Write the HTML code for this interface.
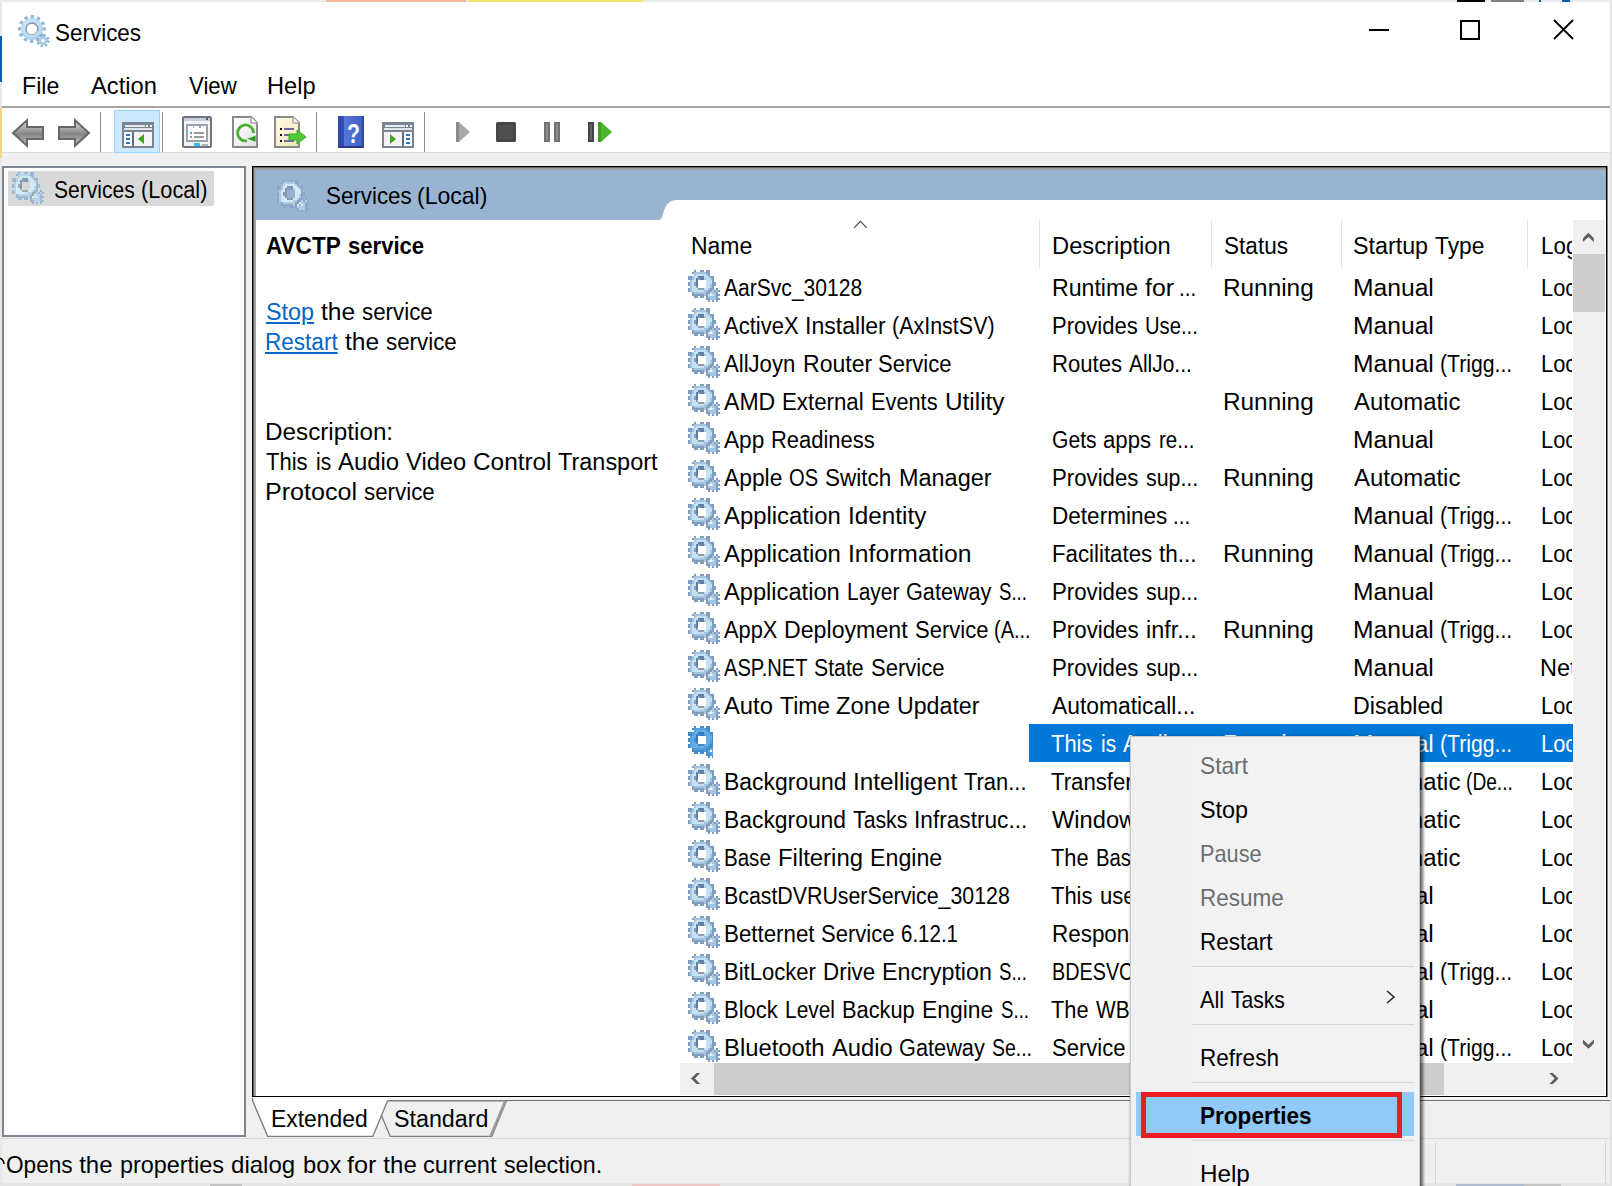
<!DOCTYPE html>
<html><head><meta charset="utf-8"><title>Services</title>
<style>
html,body{margin:0;padding:0}
body{width:1612px;height:1186px;overflow:hidden;background:#f0f0f0;position:relative;font-family:"Liberation Sans",sans-serif;color:#000}
.b{position:absolute;display:block}
.t{position:absolute;white-space:nowrap;display:block;width:0;height:0}
.w{position:absolute;top:0;transform-origin:0 50%;display:block}
.lnk{color:#0066cc}.lnk .w{text-decoration:underline}
#list{position:absolute;left:680px;top:220px;width:893px;height:843px;background:#fff;overflow:hidden}
#menu{position:absolute;left:1130px;top:736px;width:290px;height:460px;background:#f2f2f2;border:1px solid #c8c8c8;box-sizing:border-box;box-shadow:2px 2px 3px 1px rgba(0,0,0,.6)}
</style></head><body>
<svg width="0" height="0" style="position:absolute">
<symbol id="g" viewBox="0 0 16 16"><rect x="3" y="0" width="1" height="1" fill="#7f9ec0"/><rect x="6" y="0" width="2" height="1" fill="#7f9ec0"/><rect x="9" y="0" width="2" height="1" fill="#7f9ec0"/><rect x="2" y="1" width="1" height="1" fill="#7f9ec0"/><rect x="3" y="1" width="6" height="1" fill="#a5c4e0"/><rect x="9" y="1" width="2" height="1" fill="#7f9ec0"/><rect x="3" y="2" width="1" height="1" fill="#a5c4e0"/><rect x="4" y="2" width="5" height="1" fill="#c4e2f4"/><rect x="9" y="2" width="1" height="1" fill="#a5c4e0"/><rect x="10" y="2" width="1" height="1" fill="#7f9ec0"/><rect x="0" y="3" width="2" height="1" fill="#7f9ec0"/><rect x="2" y="3" width="1" height="1" fill="#a5c4e0"/><rect x="3" y="3" width="2" height="1" fill="#c4e2f4"/><rect x="5" y="3" width="3" height="1" fill="#5d7fa8"/><rect x="8" y="3" width="2" height="1" fill="#c4e2f4"/><rect x="10" y="3" width="1" height="1" fill="#a5c4e0"/><rect x="11" y="3" width="2" height="1" fill="#7f9ec0"/><rect x="0" y="4" width="2" height="1" fill="#7f9ec0"/><rect x="2" y="4" width="1" height="1" fill="#a5c4e0"/><rect x="3" y="4" width="1" height="1" fill="#c4e2f4"/><rect x="4" y="4" width="1" height="1" fill="#5d7fa8"/><rect x="5" y="4" width="1" height="1" fill="#8e9cae"/><rect x="6" y="4" width="2" height="1" fill="#5d7fa8"/><rect x="8" y="4" width="1" height="1" fill="#a5c4e0"/><rect x="9" y="4" width="2" height="1" fill="#c4e2f4"/><rect x="11" y="4" width="1" height="1" fill="#a5c4e0"/><rect x="12" y="4" width="1" height="1" fill="#7f9ec0"/><rect x="1" y="5" width="1" height="1" fill="#a5c4e0"/><rect x="2" y="5" width="2" height="1" fill="#c4e2f4"/><rect x="4" y="5" width="1" height="1" fill="#5d7fa8"/><rect x="9" y="5" width="3" height="1" fill="#c4e2f4"/><rect x="12" y="5" width="1" height="1" fill="#7f9ec0"/><rect x="0" y="6" width="1" height="1" fill="#7f9ec0"/><rect x="1" y="6" width="1" height="1" fill="#a5c4e0"/><rect x="2" y="6" width="1" height="1" fill="#c4e2f4"/><rect x="3" y="6" width="1" height="1" fill="#8e9cae"/><rect x="4" y="6" width="1" height="1" fill="#5d7fa8"/><rect x="9" y="6" width="3" height="1" fill="#c4e2f4"/><rect x="12" y="6" width="2" height="1" fill="#7f9ec0"/><rect x="0" y="7" width="1" height="1" fill="#7f9ec0"/><rect x="1" y="7" width="1" height="1" fill="#a5c4e0"/><rect x="2" y="7" width="1" height="1" fill="#c4e2f4"/><rect x="3" y="7" width="1" height="1" fill="#8e9cae"/><rect x="4" y="7" width="1" height="1" fill="#5d7fa8"/><rect x="9" y="7" width="2" height="1" fill="#c4e2f4"/><rect x="11" y="7" width="1" height="1" fill="#a5c4e0"/><rect x="12" y="7" width="2" height="1" fill="#7f9ec0"/><rect x="1" y="8" width="1" height="1" fill="#a5c4e0"/><rect x="2" y="8" width="2" height="1" fill="#c4e2f4"/><rect x="4" y="8" width="1" height="1" fill="#8e9cae"/><rect x="9" y="8" width="2" height="1" fill="#c4e2f4"/><rect x="11" y="8" width="1" height="1" fill="#a5c4e0"/><rect x="12" y="8" width="1" height="1" fill="#7f9ec0"/><rect x="0" y="9" width="1" height="1" fill="#7f9ec0"/><rect x="1" y="9" width="1" height="1" fill="#a5c4e0"/><rect x="2" y="9" width="3" height="1" fill="#c4e2f4"/><rect x="5" y="9" width="3" height="1" fill="#8e9cae"/><rect x="8" y="9" width="2" height="1" fill="#c4e2f4"/><rect x="10" y="9" width="1" height="1" fill="#a5c4e0"/><rect x="11" y="9" width="2" height="1" fill="#7f9ec0"/><rect x="14" y="9" width="1" height="1" fill="#7f9ec0"/><rect x="0" y="10" width="1" height="1" fill="#7f9ec0"/><rect x="1" y="10" width="1" height="1" fill="#a5c4e0"/><rect x="2" y="10" width="6" height="1" fill="#c4e2f4"/><rect x="8" y="10" width="2" height="1" fill="#a5c4e0"/><rect x="10" y="10" width="1" height="1" fill="#8e9cae"/><rect x="11" y="10" width="1" height="1" fill="#7f9ec0"/><rect x="12" y="10" width="1" height="1" fill="#a5c4e0"/><rect x="13" y="10" width="1" height="1" fill="#7f9ec0"/><rect x="14" y="10" width="1" height="1" fill="#a5c4e0"/><rect x="15" y="10" width="1" height="1" fill="#7f9ec0"/><rect x="2" y="11" width="1" height="1" fill="#7f9ec0"/><rect x="3" y="11" width="6" height="1" fill="#a5c4e0"/><rect x="9" y="11" width="1" height="1" fill="#7f9ec0"/><rect x="10" y="11" width="1" height="1" fill="#8e9cae"/><rect x="11" y="11" width="1" height="1" fill="#c4e2f4"/><rect x="12" y="11" width="2" height="1" fill="#a5c4e0"/><rect x="14" y="11" width="1" height="1" fill="#7f9ec0"/><rect x="2" y="12" width="6" height="1" fill="#7f9ec0"/><rect x="8" y="12" width="1" height="1" fill="#a5c4e0"/><rect x="9" y="12" width="1" height="1" fill="#8e9cae"/><rect x="10" y="12" width="1" height="1" fill="#c4e2f4"/><rect x="12" y="12" width="1" height="1" fill="#c4e2f4"/><rect x="13" y="12" width="1" height="1" fill="#a5c4e0"/><rect x="14" y="12" width="2" height="1" fill="#7f9ec0"/><rect x="3" y="13" width="2" height="1" fill="#7f9ec0"/><rect x="6" y="13" width="2" height="1" fill="#7f9ec0"/><rect x="9" y="13" width="1" height="1" fill="#7f9ec0"/><rect x="10" y="13" width="4" height="1" fill="#a5c4e0"/><rect x="14" y="13" width="1" height="1" fill="#7f9ec0"/><rect x="9" y="14" width="2" height="1" fill="#7f9ec0"/><rect x="11" y="14" width="3" height="1" fill="#a5c4e0"/><rect x="14" y="14" width="2" height="1" fill="#7f9ec0"/><rect x="10" y="15" width="1" height="1" fill="#7f9ec0"/><rect x="12" y="15" width="1" height="1" fill="#7f9ec0"/><rect x="14" y="15" width="1" height="1" fill="#7f9ec0"/></symbol>
<symbol id="gs" viewBox="0 0 16 16"><rect x="3" y="0" width="1" height="1" fill="#3f8bcb"/><rect x="6" y="0" width="2" height="1" fill="#3f8bcb"/><rect x="9" y="0" width="2" height="1" fill="#3f8bcb"/><rect x="2" y="1" width="1" height="1" fill="#3f8bcb"/><rect x="3" y="1" width="6" height="1" fill="#529edb"/><rect x="9" y="1" width="2" height="1" fill="#3f8bcb"/><rect x="3" y="2" width="1" height="1" fill="#529edb"/><rect x="4" y="2" width="5" height="1" fill="#62ade5"/><rect x="9" y="2" width="1" height="1" fill="#529edb"/><rect x="10" y="2" width="1" height="1" fill="#3f8bcb"/><rect x="0" y="3" width="2" height="1" fill="#3f8bcb"/><rect x="2" y="3" width="1" height="1" fill="#529edb"/><rect x="3" y="3" width="2" height="1" fill="#62ade5"/><rect x="5" y="3" width="3" height="1" fill="#2e7bbf"/><rect x="8" y="3" width="2" height="1" fill="#62ade5"/><rect x="10" y="3" width="1" height="1" fill="#529edb"/><rect x="11" y="3" width="2" height="1" fill="#3f8bcb"/><rect x="0" y="4" width="2" height="1" fill="#3f8bcb"/><rect x="2" y="4" width="1" height="1" fill="#529edb"/><rect x="3" y="4" width="1" height="1" fill="#62ade5"/><rect x="4" y="4" width="1" height="1" fill="#2e7bbf"/><rect x="5" y="4" width="1" height="1" fill="#478ac2"/><rect x="6" y="4" width="2" height="1" fill="#2e7bbf"/><rect x="8" y="4" width="1" height="1" fill="#529edb"/><rect x="9" y="4" width="2" height="1" fill="#62ade5"/><rect x="11" y="4" width="1" height="1" fill="#529edb"/><rect x="12" y="4" width="1" height="1" fill="#3f8bcb"/><rect x="1" y="5" width="1" height="1" fill="#529edb"/><rect x="2" y="5" width="2" height="1" fill="#62ade5"/><rect x="4" y="5" width="1" height="1" fill="#2e7bbf"/><rect x="9" y="5" width="3" height="1" fill="#62ade5"/><rect x="12" y="5" width="1" height="1" fill="#3f8bcb"/><rect x="0" y="6" width="1" height="1" fill="#3f8bcb"/><rect x="1" y="6" width="1" height="1" fill="#529edb"/><rect x="2" y="6" width="1" height="1" fill="#62ade5"/><rect x="3" y="6" width="1" height="1" fill="#478ac2"/><rect x="4" y="6" width="1" height="1" fill="#2e7bbf"/><rect x="9" y="6" width="3" height="1" fill="#62ade5"/><rect x="12" y="6" width="2" height="1" fill="#3f8bcb"/><rect x="0" y="7" width="1" height="1" fill="#3f8bcb"/><rect x="1" y="7" width="1" height="1" fill="#529edb"/><rect x="2" y="7" width="1" height="1" fill="#62ade5"/><rect x="3" y="7" width="1" height="1" fill="#478ac2"/><rect x="4" y="7" width="1" height="1" fill="#2e7bbf"/><rect x="9" y="7" width="2" height="1" fill="#62ade5"/><rect x="11" y="7" width="1" height="1" fill="#529edb"/><rect x="12" y="7" width="2" height="1" fill="#3f8bcb"/><rect x="1" y="8" width="1" height="1" fill="#529edb"/><rect x="2" y="8" width="2" height="1" fill="#62ade5"/><rect x="4" y="8" width="1" height="1" fill="#478ac2"/><rect x="9" y="8" width="2" height="1" fill="#62ade5"/><rect x="11" y="8" width="1" height="1" fill="#529edb"/><rect x="12" y="8" width="1" height="1" fill="#3f8bcb"/><rect x="0" y="9" width="1" height="1" fill="#3f8bcb"/><rect x="1" y="9" width="1" height="1" fill="#529edb"/><rect x="2" y="9" width="3" height="1" fill="#62ade5"/><rect x="5" y="9" width="3" height="1" fill="#478ac2"/><rect x="8" y="9" width="2" height="1" fill="#62ade5"/><rect x="10" y="9" width="1" height="1" fill="#529edb"/><rect x="11" y="9" width="2" height="1" fill="#3f8bcb"/><rect x="14" y="9" width="1" height="1" fill="#3f8bcb"/><rect x="0" y="10" width="1" height="1" fill="#3f8bcb"/><rect x="1" y="10" width="1" height="1" fill="#529edb"/><rect x="2" y="10" width="6" height="1" fill="#62ade5"/><rect x="8" y="10" width="2" height="1" fill="#529edb"/><rect x="10" y="10" width="1" height="1" fill="#478ac2"/><rect x="11" y="10" width="1" height="1" fill="#3f8bcb"/><rect x="12" y="10" width="1" height="1" fill="#529edb"/><rect x="13" y="10" width="1" height="1" fill="#3f8bcb"/><rect x="14" y="10" width="1" height="1" fill="#529edb"/><rect x="15" y="10" width="1" height="1" fill="#3f8bcb"/><rect x="2" y="11" width="1" height="1" fill="#3f8bcb"/><rect x="3" y="11" width="6" height="1" fill="#529edb"/><rect x="9" y="11" width="1" height="1" fill="#3f8bcb"/><rect x="10" y="11" width="1" height="1" fill="#478ac2"/><rect x="11" y="11" width="1" height="1" fill="#62ade5"/><rect x="12" y="11" width="2" height="1" fill="#529edb"/><rect x="14" y="11" width="1" height="1" fill="#3f8bcb"/><rect x="2" y="12" width="6" height="1" fill="#3f8bcb"/><rect x="8" y="12" width="1" height="1" fill="#529edb"/><rect x="9" y="12" width="1" height="1" fill="#478ac2"/><rect x="10" y="12" width="1" height="1" fill="#62ade5"/><rect x="12" y="12" width="1" height="1" fill="#62ade5"/><rect x="13" y="12" width="1" height="1" fill="#529edb"/><rect x="14" y="12" width="2" height="1" fill="#3f8bcb"/><rect x="3" y="13" width="2" height="1" fill="#3f8bcb"/><rect x="6" y="13" width="2" height="1" fill="#3f8bcb"/><rect x="9" y="13" width="1" height="1" fill="#3f8bcb"/><rect x="10" y="13" width="4" height="1" fill="#529edb"/><rect x="14" y="13" width="1" height="1" fill="#3f8bcb"/><rect x="9" y="14" width="2" height="1" fill="#3f8bcb"/><rect x="11" y="14" width="3" height="1" fill="#529edb"/><rect x="14" y="14" width="2" height="1" fill="#3f8bcb"/><rect x="10" y="15" width="1" height="1" fill="#3f8bcb"/><rect x="12" y="15" width="1" height="1" fill="#3f8bcb"/><rect x="14" y="15" width="1" height="1" fill="#3f8bcb"/></symbol>
<symbol id="gf" viewBox="0 0 16 16"><rect x="3" y="0" width="1" height="1" fill="#8aa7c6"/><rect x="6" y="0" width="2" height="1" fill="#8aa7c6"/><rect x="9" y="0" width="2" height="1" fill="#8aa7c6"/><rect x="2" y="1" width="1" height="1" fill="#8aa7c6"/><rect x="3" y="1" width="6" height="1" fill="#b0cfe6"/><rect x="9" y="1" width="2" height="1" fill="#8aa7c6"/><rect x="3" y="2" width="1" height="1" fill="#b0cfe6"/><rect x="4" y="2" width="5" height="1" fill="#d9f0fb"/><rect x="9" y="2" width="1" height="1" fill="#b0cfe6"/><rect x="10" y="2" width="1" height="1" fill="#8aa7c6"/><rect x="0" y="3" width="2" height="1" fill="#8aa7c6"/><rect x="2" y="3" width="1" height="1" fill="#b0cfe6"/><rect x="3" y="3" width="2" height="1" fill="#d9f0fb"/><rect x="5" y="3" width="3" height="1" fill="#7d96b6"/><rect x="8" y="3" width="2" height="1" fill="#d9f0fb"/><rect x="10" y="3" width="1" height="1" fill="#b0cfe6"/><rect x="11" y="3" width="2" height="1" fill="#8aa7c6"/><rect x="0" y="4" width="2" height="1" fill="#8aa7c6"/><rect x="2" y="4" width="1" height="1" fill="#b0cfe6"/><rect x="3" y="4" width="1" height="1" fill="#d9f0fb"/><rect x="4" y="4" width="1" height="1" fill="#7d96b6"/><rect x="5" y="4" width="1" height="1" fill="#8d98a8"/><rect x="6" y="4" width="2" height="1" fill="#7d96b6"/><rect x="8" y="4" width="1" height="1" fill="#b0cfe6"/><rect x="9" y="4" width="2" height="1" fill="#d9f0fb"/><rect x="11" y="4" width="1" height="1" fill="#b0cfe6"/><rect x="12" y="4" width="1" height="1" fill="#8aa7c6"/><rect x="1" y="5" width="1" height="1" fill="#b0cfe6"/><rect x="2" y="5" width="2" height="1" fill="#d9f0fb"/><rect x="4" y="5" width="1" height="1" fill="#7d96b6"/><rect x="9" y="5" width="3" height="1" fill="#d9f0fb"/><rect x="12" y="5" width="1" height="1" fill="#8aa7c6"/><rect x="0" y="6" width="1" height="1" fill="#8aa7c6"/><rect x="1" y="6" width="1" height="1" fill="#b0cfe6"/><rect x="2" y="6" width="1" height="1" fill="#d9f0fb"/><rect x="3" y="6" width="1" height="1" fill="#8d98a8"/><rect x="4" y="6" width="1" height="1" fill="#7d96b6"/><rect x="9" y="6" width="3" height="1" fill="#d9f0fb"/><rect x="12" y="6" width="2" height="1" fill="#8aa7c6"/><rect x="0" y="7" width="1" height="1" fill="#8aa7c6"/><rect x="1" y="7" width="1" height="1" fill="#b0cfe6"/><rect x="2" y="7" width="1" height="1" fill="#d9f0fb"/><rect x="3" y="7" width="1" height="1" fill="#8d98a8"/><rect x="4" y="7" width="1" height="1" fill="#7d96b6"/><rect x="9" y="7" width="2" height="1" fill="#d9f0fb"/><rect x="11" y="7" width="1" height="1" fill="#b0cfe6"/><rect x="12" y="7" width="2" height="1" fill="#8aa7c6"/><rect x="1" y="8" width="1" height="1" fill="#b0cfe6"/><rect x="2" y="8" width="2" height="1" fill="#d9f0fb"/><rect x="4" y="8" width="1" height="1" fill="#8d98a8"/><rect x="9" y="8" width="2" height="1" fill="#d9f0fb"/><rect x="11" y="8" width="1" height="1" fill="#b0cfe6"/><rect x="12" y="8" width="1" height="1" fill="#8aa7c6"/><rect x="0" y="9" width="1" height="1" fill="#8aa7c6"/><rect x="1" y="9" width="1" height="1" fill="#b0cfe6"/><rect x="2" y="9" width="3" height="1" fill="#d9f0fb"/><rect x="5" y="9" width="3" height="1" fill="#8d98a8"/><rect x="8" y="9" width="2" height="1" fill="#d9f0fb"/><rect x="10" y="9" width="1" height="1" fill="#b0cfe6"/><rect x="11" y="9" width="2" height="1" fill="#8aa7c6"/><rect x="14" y="9" width="1" height="1" fill="#8aa7c6"/><rect x="0" y="10" width="1" height="1" fill="#8aa7c6"/><rect x="1" y="10" width="1" height="1" fill="#b0cfe6"/><rect x="2" y="10" width="6" height="1" fill="#d9f0fb"/><rect x="8" y="10" width="2" height="1" fill="#b0cfe6"/><rect x="10" y="10" width="1" height="1" fill="#8d98a8"/><rect x="11" y="10" width="1" height="1" fill="#8aa7c6"/><rect x="12" y="10" width="1" height="1" fill="#b0cfe6"/><rect x="13" y="10" width="1" height="1" fill="#8aa7c6"/><rect x="14" y="10" width="1" height="1" fill="#b0cfe6"/><rect x="15" y="10" width="1" height="1" fill="#8aa7c6"/><rect x="2" y="11" width="1" height="1" fill="#8aa7c6"/><rect x="3" y="11" width="6" height="1" fill="#b0cfe6"/><rect x="9" y="11" width="1" height="1" fill="#8aa7c6"/><rect x="10" y="11" width="1" height="1" fill="#8d98a8"/><rect x="11" y="11" width="1" height="1" fill="#d9f0fb"/><rect x="12" y="11" width="2" height="1" fill="#b0cfe6"/><rect x="14" y="11" width="1" height="1" fill="#8aa7c6"/><rect x="2" y="12" width="6" height="1" fill="#8aa7c6"/><rect x="8" y="12" width="1" height="1" fill="#b0cfe6"/><rect x="9" y="12" width="1" height="1" fill="#8d98a8"/><rect x="10" y="12" width="1" height="1" fill="#d9f0fb"/><rect x="12" y="12" width="1" height="1" fill="#d9f0fb"/><rect x="13" y="12" width="1" height="1" fill="#b0cfe6"/><rect x="14" y="12" width="2" height="1" fill="#8aa7c6"/><rect x="3" y="13" width="2" height="1" fill="#8aa7c6"/><rect x="6" y="13" width="2" height="1" fill="#8aa7c6"/><rect x="9" y="13" width="1" height="1" fill="#8aa7c6"/><rect x="10" y="13" width="4" height="1" fill="#b0cfe6"/><rect x="14" y="13" width="1" height="1" fill="#8aa7c6"/><rect x="9" y="14" width="2" height="1" fill="#8aa7c6"/><rect x="11" y="14" width="3" height="1" fill="#b0cfe6"/><rect x="14" y="14" width="2" height="1" fill="#8aa7c6"/><rect x="10" y="15" width="1" height="1" fill="#8aa7c6"/><rect x="12" y="15" width="1" height="1" fill="#8aa7c6"/><rect x="14" y="15" width="1" height="1" fill="#8aa7c6"/></symbol>
<symbol id="gl" viewBox="0 0 16 16"><rect x="3" y="0" width="1" height="1" fill="#93b4d6"/><rect x="6" y="0" width="2" height="1" fill="#93b4d6"/><rect x="9" y="0" width="2" height="1" fill="#93b4d6"/><rect x="2" y="1" width="1" height="1" fill="#93b4d6"/><rect x="3" y="1" width="6" height="1" fill="#b4d3ea"/><rect x="9" y="1" width="2" height="1" fill="#93b4d6"/><rect x="3" y="2" width="1" height="1" fill="#b4d3ea"/><rect x="4" y="2" width="5" height="1" fill="#cdeefb"/><rect x="9" y="2" width="1" height="1" fill="#b4d3ea"/><rect x="10" y="2" width="1" height="1" fill="#93b4d6"/><rect x="0" y="3" width="2" height="1" fill="#93b4d6"/><rect x="2" y="3" width="1" height="1" fill="#b4d3ea"/><rect x="3" y="3" width="2" height="1" fill="#cdeefb"/><rect x="5" y="3" width="3" height="1" fill="#7b93b0"/><rect x="8" y="3" width="2" height="1" fill="#cdeefb"/><rect x="10" y="3" width="1" height="1" fill="#b4d3ea"/><rect x="11" y="3" width="2" height="1" fill="#93b4d6"/><rect x="0" y="4" width="2" height="1" fill="#93b4d6"/><rect x="2" y="4" width="1" height="1" fill="#b4d3ea"/><rect x="3" y="4" width="1" height="1" fill="#cdeefb"/><rect x="4" y="4" width="1" height="1" fill="#7b93b0"/><rect x="5" y="4" width="1" height="1" fill="#9aa3ad"/><rect x="6" y="4" width="2" height="1" fill="#7b93b0"/><rect x="8" y="4" width="1" height="1" fill="#b4d3ea"/><rect x="9" y="4" width="2" height="1" fill="#cdeefb"/><rect x="11" y="4" width="1" height="1" fill="#b4d3ea"/><rect x="12" y="4" width="1" height="1" fill="#93b4d6"/><rect x="1" y="5" width="1" height="1" fill="#b4d3ea"/><rect x="2" y="5" width="2" height="1" fill="#cdeefb"/><rect x="4" y="5" width="1" height="1" fill="#7b93b0"/><rect x="9" y="5" width="3" height="1" fill="#cdeefb"/><rect x="12" y="5" width="1" height="1" fill="#93b4d6"/><rect x="0" y="6" width="1" height="1" fill="#93b4d6"/><rect x="1" y="6" width="1" height="1" fill="#b4d3ea"/><rect x="2" y="6" width="1" height="1" fill="#cdeefb"/><rect x="3" y="6" width="1" height="1" fill="#9aa3ad"/><rect x="4" y="6" width="1" height="1" fill="#7b93b0"/><rect x="9" y="6" width="3" height="1" fill="#cdeefb"/><rect x="12" y="6" width="2" height="1" fill="#93b4d6"/><rect x="0" y="7" width="1" height="1" fill="#93b4d6"/><rect x="1" y="7" width="1" height="1" fill="#b4d3ea"/><rect x="2" y="7" width="1" height="1" fill="#cdeefb"/><rect x="3" y="7" width="1" height="1" fill="#9aa3ad"/><rect x="4" y="7" width="1" height="1" fill="#7b93b0"/><rect x="9" y="7" width="2" height="1" fill="#cdeefb"/><rect x="11" y="7" width="1" height="1" fill="#b4d3ea"/><rect x="12" y="7" width="2" height="1" fill="#93b4d6"/><rect x="1" y="8" width="1" height="1" fill="#b4d3ea"/><rect x="2" y="8" width="2" height="1" fill="#cdeefb"/><rect x="4" y="8" width="1" height="1" fill="#9aa3ad"/><rect x="9" y="8" width="2" height="1" fill="#cdeefb"/><rect x="11" y="8" width="1" height="1" fill="#b4d3ea"/><rect x="12" y="8" width="1" height="1" fill="#93b4d6"/><rect x="0" y="9" width="1" height="1" fill="#93b4d6"/><rect x="1" y="9" width="1" height="1" fill="#b4d3ea"/><rect x="2" y="9" width="3" height="1" fill="#cdeefb"/><rect x="5" y="9" width="3" height="1" fill="#9aa3ad"/><rect x="8" y="9" width="2" height="1" fill="#cdeefb"/><rect x="10" y="9" width="1" height="1" fill="#b4d3ea"/><rect x="11" y="9" width="2" height="1" fill="#93b4d6"/><rect x="14" y="9" width="1" height="1" fill="#93b4d6"/><rect x="0" y="10" width="1" height="1" fill="#93b4d6"/><rect x="1" y="10" width="1" height="1" fill="#b4d3ea"/><rect x="2" y="10" width="6" height="1" fill="#cdeefb"/><rect x="8" y="10" width="2" height="1" fill="#b4d3ea"/><rect x="10" y="10" width="1" height="1" fill="#9aa3ad"/><rect x="11" y="10" width="1" height="1" fill="#93b4d6"/><rect x="12" y="10" width="1" height="1" fill="#b4d3ea"/><rect x="13" y="10" width="1" height="1" fill="#93b4d6"/><rect x="14" y="10" width="1" height="1" fill="#b4d3ea"/><rect x="15" y="10" width="1" height="1" fill="#93b4d6"/><rect x="2" y="11" width="1" height="1" fill="#93b4d6"/><rect x="3" y="11" width="6" height="1" fill="#b4d3ea"/><rect x="9" y="11" width="1" height="1" fill="#93b4d6"/><rect x="10" y="11" width="1" height="1" fill="#9aa3ad"/><rect x="11" y="11" width="1" height="1" fill="#cdeefb"/><rect x="12" y="11" width="2" height="1" fill="#b4d3ea"/><rect x="14" y="11" width="1" height="1" fill="#93b4d6"/><rect x="2" y="12" width="6" height="1" fill="#93b4d6"/><rect x="8" y="12" width="1" height="1" fill="#b4d3ea"/><rect x="9" y="12" width="1" height="1" fill="#9aa3ad"/><rect x="10" y="12" width="1" height="1" fill="#cdeefb"/><rect x="12" y="12" width="1" height="1" fill="#cdeefb"/><rect x="13" y="12" width="1" height="1" fill="#b4d3ea"/><rect x="14" y="12" width="2" height="1" fill="#93b4d6"/><rect x="3" y="13" width="2" height="1" fill="#93b4d6"/><rect x="6" y="13" width="2" height="1" fill="#93b4d6"/><rect x="9" y="13" width="1" height="1" fill="#93b4d6"/><rect x="10" y="13" width="4" height="1" fill="#b4d3ea"/><rect x="14" y="13" width="1" height="1" fill="#93b4d6"/><rect x="9" y="14" width="2" height="1" fill="#93b4d6"/><rect x="11" y="14" width="3" height="1" fill="#b4d3ea"/><rect x="14" y="14" width="2" height="1" fill="#93b4d6"/><rect x="10" y="15" width="1" height="1" fill="#93b4d6"/><rect x="12" y="15" width="1" height="1" fill="#93b4d6"/><rect x="14" y="15" width="1" height="1" fill="#93b4d6"/></symbol>
</svg>
<div class="b" style="left:0px;top:0px;width:1612px;height:3px;background:#e9e9e9;"></div>
<div class="b" style="left:326px;top:0px;width:140px;height:2px;background:#f4b8a4;"></div>
<div class="b" style="left:468px;top:0px;width:175px;height:2px;background:#ece56f;"></div>
<div class="b" style="left:1457px;top:0px;width:28px;height:2px;background:#000;"></div>
<div class="b" style="left:1491px;top:0px;width:33px;height:2px;background:#808080;"></div>
<div class="b" style="left:0px;top:2px;width:2px;height:1184px;background:#e8e8e8;"></div>
<div class="b" style="left:0px;top:36px;width:2px;height:46px;background:#0a5db5;"></div>
<div class="b" style="left:0px;top:108px;width:2px;height:50px;background:#f0d684;"></div>
<div class="b" style="left:1610px;top:2px;width:2px;height:1184px;background:#e4e4e4;"></div>
<div class="b" style="left:0px;top:1183px;width:1612px;height:3px;background:#e6e6e6;"></div>
<div class="b" style="left:210px;top:1184px;width:32px;height:2px;background:#c4c4c4;"></div>
<div class="b" style="left:632px;top:1184px;width:88px;height:2px;background:#f2c9c9;"></div>
<div class="b" style="left:1456px;top:1184px;width:68px;height:2px;background:#aebccd;"></div>
<div class="b" style="left:1524px;top:1184px;width:37px;height:2px;background:#c6c6c6;"></div>
<div class="b" style="left:1539px;top:0px;width:2px;height:2px;background:#0a5db5;"></div>
<div class="b" style="left:1562px;top:0px;width:8px;height:2px;background:#0a5db5;"></div>
<div class="b" style="left:2px;top:2px;width:1608px;height:1181px;background:#f0f0f0;"></div>
<div class="b" style="left:2px;top:2px;width:1608px;height:104px;background:#fff;"></div>
<div class="b" style="left:2px;top:106px;width:1608px;height:2px;background:#a5a5a5;"></div>
<div class="b" style="left:2px;top:108px;width:1608px;height:44px;background:#fff;"></div>
<div class="b" style="left:2px;top:152px;width:1608px;height:1px;background:#dcdcdc;"></div>
<svg class="b" style="left:14px;top:10px" width="40" height="40">
<defs><radialGradient id="tg" cx=".45" cy=".4" r=".7"><stop offset="0" stop-color="#d6f0fb"/><stop offset=".7" stop-color="#b7dbf0"/><stop offset="1" stop-color="#93b9dc"/></radialGradient></defs>
<circle cx="17.9" cy="19" r="12.1" fill="none" stroke="#8fb3d5" stroke-width="3.6" stroke-dasharray="3.1 3.235" transform="rotate(-7 17.9 19)"/>
<circle cx="17.9" cy="19" r="10.9" fill="url(#tg)"/>
<circle cx="29" cy="30.6" r="5.3" fill="none" stroke="#88abcf" stroke-width="2.6" stroke-dasharray="2.0 2.163"/>
<circle cx="29" cy="30.6" r="4.7" fill="#a8cbe7"/><circle cx="29" cy="30.6" r="1.7" fill="#fff"/>
<circle cx="17.9" cy="19" r="6.0" fill="#fff" stroke="#8d9aab" stroke-width="1.5"/>
<path d="M12 22.5 A6.6 6.6 0 0 0 24 21.5" fill="none" stroke="#b8dcf2" stroke-width="1.6"/>
</svg>
<span class="t" style="left:0;top:18.0px;font-size:24px;line-height:30px;"><span class="w" style="left:54.90px;transform:scaleX(0.9353)">Services</span></span>
<svg class="b" style="left:1360px;top:12px" width="230" height="40"><g stroke="#000" stroke-width="2" fill="none"><path d="M9 18H29"/><rect x="101" y="9" width="18" height="18"/><path d="M194 8L213 27M213 8L194 27" stroke-width="1.8"/></g></svg>
<span class="t" style="left:0;top:71.0px;font-size:24px;line-height:30px;"><span class="w" style="left:21.75px;transform:scaleX(0.9639)">File</span></span>
<span class="t" style="left:0;top:71.0px;font-size:24px;line-height:30px;"><span class="w" style="left:90.60px;transform:scaleX(0.9881)">Action</span></span>
<span class="t" style="left:0;top:71.0px;font-size:24px;line-height:30px;"><span class="w" style="left:188.60px;transform:scaleX(0.9240)">View</span></span>
<span class="t" style="left:0;top:71.0px;font-size:24px;line-height:30px;"><span class="w" style="left:267.31px;transform:scaleX(0.9858)">Help</span></span>
<div class="b" style="left:100px;top:112px;width:1px;height:40px;background:#8e8e8e;"></div>
<div class="b" style="left:162px;top:112px;width:1px;height:40px;background:#8e8e8e;"></div>
<div class="b" style="left:316px;top:112px;width:1px;height:40px;background:#8e8e8e;"></div>
<div class="b" style="left:424px;top:112px;width:1px;height:40px;background:#8e8e8e;"></div>
<div class="b" style="left:114px;top:110px;width:46px;height:43px;background:#cce8ff;box-sizing:border-box;border:1px solid #99d1ff;"></div>
<svg class="b" style="left:0;top:108px" width="640" height="46">
<defs>
<linearGradient id="ga" x1="0" y1="0" x2="0" y2="1"><stop offset="0" stop-color="#cfcfcf"/><stop offset=".55" stop-color="#858585"/><stop offset="1" stop-color="#b8b8b8"/></linearGradient>
<linearGradient id="gh" x1="0" y1="0" x2="1" y2="0"><stop offset="0" stop-color="#2f45ad"/><stop offset=".22" stop-color="#3550b8"/><stop offset=".23" stop-color="#5676d8"/><stop offset="1" stop-color="#3f5fc4"/></linearGradient>
<linearGradient id="gp" x1="0" y1="0" x2="1" y2="1"><stop offset="0" stop-color="#ffffff"/><stop offset="1" stop-color="#e4e4e4"/></linearGradient>
<linearGradient id="gc" x1="0" y1="0" x2="1" y2="1"><stop offset="0" stop-color="#fffbe8"/><stop offset="1" stop-color="#f3e5b4"/></linearGradient>
</defs>
<!-- back / forward -->
<path d="M11.5 25 L28 10 V18 H44 V32 H28 V40 Z" fill="#676767"/><path d="M14.6 25 L26 14.6 V20 H42 V30 H26 V35.4 Z" fill="url(#ga)"/>
<path d="M90.5 25 L74 10 V18 H58 V32 H74 V40 Z" fill="#676767"/><path d="M87.4 25 L76 14.6 V20 H60 V30 H76 V35.4 Z" fill="url(#ga)"/>
<!-- show/hide tree -->
<g transform="translate(122,14)">
<rect x="1" y="1" width="30" height="24" fill="#f4f4f4" stroke="#7b8494" stroke-width="2"/>
<rect x="2" y="2" width="28" height="8" fill="#7b8494"/><rect x="3" y="3" width="20" height="2" fill="#e6e9ef"/><rect x="24" y="3" width="2" height="2" fill="#fff"/><rect x="28" y="3" width="2" height="2" fill="#fff"/><rect x="2" y="6" width="28" height="2" fill="#dfe3ea"/>
<rect x="10" y="10" width="2" height="14" fill="#5c6b8a"/><rect x="2" y="10" width="8" height="14" fill="#fff"/>
<rect x="4" y="12" width="4" height="2" fill="#2f6fc0"/><rect x="4" y="16" width="4" height="2" fill="#2f6fc0"/><rect x="4" y="20" width="4" height="2" fill="#2f6fc0"/>
<path d="M16 17 L22 12 V22 Z" fill="#41a51e"/>
</g>
<!-- properties -->
<g transform="translate(182,8)">
<rect x="1" y="1" width="28" height="30" rx="1" fill="#f3f4f6" stroke="#6d7482" stroke-width="2"/>
<rect x="2" y="2" width="26" height="3" fill="#c9ccd3"/><rect x="24" y="2" width="2" height="2" fill="#3d5a99"/>
<rect x="5" y="9" width="20" height="16" fill="#fff" stroke="#9aa0ad" stroke-width="2"/>
<rect x="11" y="8" width="14" height="4" fill="#9aa0ad"/><rect x="12" y="10" width="5" height="2" fill="#fff"/><rect x="19" y="10" width="5" height="2" fill="#fff"/>
<rect x="8" y="16" width="2" height="2" fill="#19b5f1"/><rect x="12" y="16" width="10" height="2" fill="#9a9a9a"/>
<rect x="8" y="20" width="2" height="2" fill="#9a9a9a"/><rect x="12" y="20" width="10" height="2" fill="#9a9a9a"/>
<rect x="12" y="27" width="6" height="3" fill="#28c4f5"/><rect x="20" y="28" width="6" height="2" fill="#b5b5b5"/>
</g>
<!-- refresh -->
<g transform="translate(232,8)">
<path d="M1 1 H19 L25 7 V31 H1 Z" fill="url(#gp)" stroke="#8a8a8a" stroke-width="2"/>
<path d="M19 1 V7 H25" fill="#fff" stroke="#a8a8a8" stroke-width="1.5"/>
<path d="M21.6 17 A8 8 0 1 0 15 24.8" fill="none" stroke="#45b030" stroke-width="2.8"/>
<path d="M15.2 22.8 L23.6 19.8 V25.8 Z" fill="#2d9a1e"/>
</g>
<!-- export list -->
<g transform="translate(274,8)">
<path d="M1 1 H19 L25 7 V31 H1 Z" fill="url(#gc)" stroke="#8a8a8a" stroke-width="2"/>
<path d="M19 1 V7 H25" fill="#fff" stroke="#a8a8a8" stroke-width="1.5"/>
<rect x="6" y="12" width="2" height="2" fill="#111"/><rect x="10" y="12" width="10" height="2" fill="#6f6aa0"/>
<rect x="6" y="18" width="2" height="2" fill="#111"/><rect x="10" y="18" width="10" height="2" fill="#6f6aa0"/>
<rect x="6" y="24" width="2" height="2" fill="#111"/><rect x="10" y="24" width="10" height="2" fill="#6f6aa0"/>
<path d="M15 18 H23 V14 L32 21 L23 28 V24 H15 Z" fill="#55c83a" stroke="#3aa822" stroke-width="1"/>
</g>
<!-- help -->
<g transform="translate(338,8)">
<rect x="0" y="0" width="26" height="32" fill="url(#gh)"/><rect x="0" y="30" width="26" height="2" fill="#27358a"/><rect x="24" y="0" width="2" height="32" fill="#31449f"/>
<text x="9" y="26.5" font-family="Liberation Sans, sans-serif" font-weight="bold" font-size="28" textLength="13" lengthAdjust="spacingAndGlyphs" fill="#fff">?</text>
</g>
<!-- action pane -->
<g transform="translate(382,14)">
<rect x="1" y="1" width="30" height="24" fill="#f4f4f4" stroke="#7b8494" stroke-width="2"/>
<rect x="2" y="2" width="28" height="8" fill="#7b8494"/><rect x="3" y="3" width="20" height="2" fill="#e6e9ef"/><rect x="24" y="3" width="2" height="2" fill="#fff"/><rect x="28" y="3" width="2" height="2" fill="#fff"/><rect x="2" y="6" width="28" height="2" fill="#dfe3ea"/>
<rect x="20" y="10" width="2" height="14" fill="#5c6b8a"/><rect x="22" y="10" width="8" height="14" fill="#fff"/>
<rect x="24" y="12" width="4" height="2" fill="#2f6fc0"/><rect x="24" y="16" width="4" height="2" fill="#2f6fc0"/><rect x="24" y="20" width="4" height="2" fill="#2f6fc0"/>
<path d="M14 17 L8 12 V22 Z" fill="#41a51e"/>
</g>
<!-- play stop pause restart -->
<path d="M456 14 H459 L470 24 L459 34 H456 Z" fill="#a9a9a9"/><rect x="456" y="14" width="3" height="20" fill="#8a8a8a"/>
<rect x="496" y="14" width="20" height="20" rx="1.5" fill="#474747"/><rect x="499" y="17" width="14" height="14" fill="#505050"/>
<rect x="544" y="14" width="6" height="20" fill="#727272"/><rect x="546" y="16" width="2" height="16" fill="#8f8f8f"/>
<rect x="554" y="14" width="6" height="20" fill="#727272"/><rect x="556" y="16" width="2" height="16" fill="#8f8f8f"/>
<rect x="588" y="14" width="6" height="20" fill="#444"/><rect x="590" y="16" width="2" height="16" fill="#666"/>
<path d="M598 14 H601 L612 24 L601 34 H598 Z" fill="#4db52c"/><rect x="598" y="14" width="3" height="20" fill="#3d9f20"/>
</svg>
<div class="b" style="left:2px;top:166px;width:244px;height:971px;background:#fff;box-sizing:border-box;border:2px solid #7e8592;"></div>
<div class="b" style="left:8px;top:171px;width:206px;height:35px;background:#d9d9d9;"></div>
<svg class="b" style="left:12px;top:172px;opacity:0.9;" width="32" height="32" shape-rendering="crispEdges"><use href="#gl"/></svg>
<span class="t" style="left:0;top:175.5px;font-size:23px;line-height:29px;"><span class="w" style="left:53.96px;transform:scaleX(0.9157)">Services</span> <span class="w" style="left:140.66px;transform:scaleX(0.9441)">(Local)</span></span>
<div class="b" style="left:252px;top:166px;width:1358px;height:934px;background:#f4f4f4;"></div>
<div class="b" style="left:252px;top:1100px;width:1358px;height:1px;background:#6e6e6e;"></div>
<div class="b" style="left:252px;top:166px;width:1356px;height:931px;background:#000;"></div>
<div class="b" style="left:1607px;top:166px;width:1px;height:931px;background:#808080;"></div>
<div class="b" style="left:253px;top:167px;width:1353px;height:929px;background:#666;"></div>
<div class="b" style="left:254px;top:168px;width:1352px;height:928px;background:#a0a0a0;"></div>
<div class="b" style="left:256px;top:170px;width:1350px;height:926px;background:#fff;"></div>
<div class="b" style="left:256px;top:170px;width:1350px;height:50px;background:#99b4d1;"></div>
<svg class="b" style="left:655px;top:198px" width="960" height="24"><path d="M0 22 H4 C10 22 6 2 22 2 H951 V22 Z" fill="#fff"/></svg>
<svg class="b" style="left:277px;top:180px;opacity:0.9;" width="32" height="32" shape-rendering="crispEdges"><use href="#gf"/></svg>
<span class="t" style="left:0;top:181.0px;font-size:24px;line-height:30px;"><span class="w" style="left:325.91px;transform:scaleX(0.9310)">Services</span> <span class="w" style="left:417.39px;transform:scaleX(0.9598)">(Local)</span></span>
<span class="t" style="left:0;top:231.5px;font-size:23px;line-height:29px;font-weight:bold;"><span class="w" style="left:265.55px;transform:scaleX(0.9795)">AVCTP</span> <span class="w" style="left:347.96px;transform:scaleX(0.9603)">service</span></span>
<span class="t lnk" style="left:0;top:297.5px;font-size:23px;line-height:29px;"><span class="w" style="left:265.87px;transform:scaleX(1.0145)">Stop</span></span>
<span class="t" style="left:0;top:297.5px;font-size:23px;line-height:29px;"><span class="w" style="left:320.85px;transform:scaleX(1.0686)">the</span> <span class="w" style="left:362.05px;transform:scaleX(0.9716)">service</span></span>
<span class="t lnk" style="left:0;top:327.5px;font-size:23px;line-height:29px;"><span class="w" style="left:265.00px;transform:scaleX(0.9800)">Restart</span></span>
<span class="t" style="left:0;top:327.5px;font-size:23px;line-height:29px;"><span class="w" style="left:344.65px;transform:scaleX(1.0686)">the</span> <span class="w" style="left:385.85px;transform:scaleX(0.9716)">service</span></span>
<span class="t" style="left:0;top:417.5px;font-size:23px;line-height:29px;"><span class="w" style="left:264.86px;transform:scaleX(1.0550)">Description:</span></span>
<span class="t" style="left:0;top:447.5px;font-size:23px;line-height:29px;"><span class="w" style="left:266.36px;transform:scaleX(0.9580)">This</span> <span class="w" style="left:315.55px;transform:scaleX(0.9104)">is</span> <span class="w" style="left:337.77px;transform:scaleX(1.0387)">Audio</span> <span class="w" style="left:406.04px;transform:scaleX(1.0305)">Video</span> <span class="w" style="left:473.04px;transform:scaleX(1.0590)">Control</span> <span class="w" style="left:558.30px;transform:scaleX(1.0203)">Transport</span></span>
<span class="t" style="left:0;top:477.5px;font-size:23px;line-height:29px;"><span class="w" style="left:264.79px;transform:scaleX(1.0905)">Protocol</span> <span class="w" style="left:364.35px;transform:scaleX(0.9716)">service</span></span>
<div id="list">
<div class="b" style="left:359px;top:0px;width:1px;height:48px;background:#e5e5e5;"></div>
<div class="b" style="left:531px;top:0px;width:1px;height:48px;background:#e5e5e5;"></div>
<div class="b" style="left:661px;top:0px;width:1px;height:48px;background:#e5e5e5;"></div>
<div class="b" style="left:847px;top:0px;width:1px;height:48px;background:#e5e5e5;"></div>
<svg class="b" style="left:172px;top:0px" width="18" height="10"><path d="M2 7.8 L8.4 1.4 L14.8 7.8" fill="none" stroke="#444" stroke-width="1.2"/></svg>
<span class="t" style="left:0;top:11.5px;font-size:23px;line-height:29px;"><span class="w" style="left:10.96px;transform:scaleX(0.9989)">Name</span></span>
<span class="t" style="left:0;top:11.5px;font-size:23px;line-height:29px;"><span class="w" style="left:371.60px;transform:scaleX(1.0312)">Description</span></span>
<span class="t" style="left:0;top:11.5px;font-size:23px;line-height:29px;"><span class="w" style="left:543.80px;transform:scaleX(0.9814)">Status</span></span>
<span class="t" style="left:0;top:11.5px;font-size:23px;line-height:29px;"><span class="w" style="left:673.47px;transform:scaleX(1.0117)">Startup</span> <span class="w" style="left:755.31px;transform:scaleX(0.9898)">Type</span></span>
<span class="t" style="left:0;top:11.5px;font-size:23px;line-height:29px;"><span class="w" style="left:860.51px;transform:scaleX(0.9727)">Log</span> <span class="w" style="left:905.27px;transform:scaleX(1.0030)">On</span> <span class="w" style="left:943.57px;transform:scaleX(0.8734)">As</span></span>
<svg class="b" style="left:8px;top:50px;" width="32" height="32" shape-rendering="crispEdges"><use href="#g"/></svg>
<span class="t" style="left:0;top:53.5px;font-size:23px;line-height:29px;"><span class="w" style="left:43.90px;transform:scaleX(0.9156)">AarSvc_30128</span></span>
<span class="t" style="left:0;top:53.5px;font-size:23px;line-height:29px;"><span class="w" style="left:371.75px;transform:scaleX(1.0049)">Runtime</span> <span class="w" style="left:464.55px;transform:scaleX(1.0804)">for</span> <span class="w" style="left:498.94px;transform:scaleX(0.8964)">...</span></span>
<span class="t" style="left:0;top:53.5px;font-size:23px;line-height:29px;"><span class="w" style="left:543.25px;transform:scaleX(1.0585)">Running</span></span>
<span class="t" style="left:0;top:53.5px;font-size:23px;line-height:29px;"><span class="w" style="left:673.33px;transform:scaleX(1.0717)">Manual</span></span>
<span class="t" style="left:0;top:53.5px;font-size:23px;line-height:29px;"><span class="w" style="left:860.55px;transform:scaleX(0.9512)">Local</span> <span class="w" style="left:920.16px;transform:scaleX(0.8984)">Syste...</span></span>
<svg class="b" style="left:8px;top:88px;" width="32" height="32" shape-rendering="crispEdges"><use href="#g"/></svg>
<span class="t" style="left:0;top:91.5px;font-size:23px;line-height:29px;"><span class="w" style="left:43.90px;transform:scaleX(0.9580)">ActiveX</span> <span class="w" style="left:124.95px;transform:scaleX(1.0030)">Installer</span> <span class="w" style="left:211.54px;transform:scaleX(0.9336)">(AxInstSV)</span></span>
<span class="t" style="left:0;top:91.5px;font-size:23px;line-height:29px;"><span class="w" style="left:371.83px;transform:scaleX(0.9594)">Provides</span> <span class="w" style="left:465.06px;transform:scaleX(0.8789)">Use...</span></span>
<span class="t" style="left:0;top:91.5px;font-size:23px;line-height:29px;"><span class="w" style="left:673.33px;transform:scaleX(1.0717)">Manual</span></span>
<span class="t" style="left:0;top:91.5px;font-size:23px;line-height:29px;"><span class="w" style="left:860.55px;transform:scaleX(0.9512)">Local</span> <span class="w" style="left:920.16px;transform:scaleX(0.8984)">Syste...</span></span>
<svg class="b" style="left:8px;top:126px;" width="32" height="32" shape-rendering="crispEdges"><use href="#g"/></svg>
<span class="t" style="left:0;top:129.5px;font-size:23px;line-height:29px;"><span class="w" style="left:43.90px;transform:scaleX(0.9608)">AllJoyn</span> <span class="w" style="left:122.58px;transform:scaleX(1.0013)">Router</span> <span class="w" style="left:198.42px;transform:scaleX(0.9576)">Service</span></span>
<span class="t" style="left:0;top:129.5px;font-size:23px;line-height:29px;"><span class="w" style="left:371.83px;transform:scaleX(0.9617)">Routes</span> <span class="w" style="left:449.05px;transform:scaleX(0.9092)">AllJo...</span></span>
<span class="t" style="left:0;top:129.5px;font-size:23px;line-height:29px;"><span class="w" style="left:673.33px;transform:scaleX(1.0717)">Manual</span> <span class="w" style="left:760.13px;transform:scaleX(0.9216)">(Trigg...</span></span>
<span class="t" style="left:0;top:129.5px;font-size:23px;line-height:29px;"><span class="w" style="left:860.55px;transform:scaleX(0.9512)">Local</span> <span class="w" style="left:920.11px;transform:scaleX(0.9576)">Service</span></span>
<svg class="b" style="left:8px;top:164px;" width="32" height="32" shape-rendering="crispEdges"><use href="#g"/></svg>
<span class="t" style="left:0;top:167.5px;font-size:23px;line-height:29px;"><span class="w" style="left:43.90px;transform:scaleX(1.0026)">AMD</span> <span class="w" style="left:102.16px;transform:scaleX(0.9676)">External</span> <span class="w" style="left:191.22px;transform:scaleX(0.9462)">Events</span> <span class="w" style="left:264.93px;transform:scaleX(1.0579)">Utility</span></span>
<span class="t" style="left:0;top:167.5px;font-size:23px;line-height:29px;"><span class="w" style="left:543.25px;transform:scaleX(1.0585)">Running</span></span>
<span class="t" style="left:0;top:167.5px;font-size:23px;line-height:29px;"><span class="w" style="left:673.60px;transform:scaleX(1.0403)">Automatic</span></span>
<span class="t" style="left:0;top:167.5px;font-size:23px;line-height:29px;"><span class="w" style="left:860.55px;transform:scaleX(0.9512)">Local</span> <span class="w" style="left:920.16px;transform:scaleX(0.8984)">Syste...</span></span>
<svg class="b" style="left:8px;top:202px;" width="32" height="32" shape-rendering="crispEdges"><use href="#g"/></svg>
<span class="t" style="left:0;top:205.5px;font-size:23px;line-height:29px;"><span class="w" style="left:43.90px;transform:scaleX(0.9849)">App</span> <span class="w" style="left:91.33px;transform:scaleX(0.9537)">Readiness</span></span>
<span class="t" style="left:0;top:205.5px;font-size:23px;line-height:29px;"><span class="w" style="left:371.74px;transform:scaleX(0.9179)">Gets</span> <span class="w" style="left:423.24px;transform:scaleX(0.9628)">apps</span> <span class="w" style="left:478.86px;transform:scaleX(0.8919)">re...</span></span>
<span class="t" style="left:0;top:205.5px;font-size:23px;line-height:29px;"><span class="w" style="left:673.33px;transform:scaleX(1.0717)">Manual</span></span>
<span class="t" style="left:0;top:205.5px;font-size:23px;line-height:29px;"><span class="w" style="left:860.55px;transform:scaleX(0.9512)">Local</span> <span class="w" style="left:920.16px;transform:scaleX(0.8984)">Syste...</span></span>
<svg class="b" style="left:8px;top:240px;" width="32" height="32" shape-rendering="crispEdges"><use href="#g"/></svg>
<span class="t" style="left:0;top:243.5px;font-size:23px;line-height:29px;"><span class="w" style="left:43.90px;transform:scaleX(0.9924)">Apple</span> <span class="w" style="left:109.28px;transform:scaleX(0.8739)">OS</span> <span class="w" style="left:145.19px;transform:scaleX(0.9760)">Switch</span> <span class="w" style="left:218.65px;transform:scaleX(1.0194)">Manager</span></span>
<span class="t" style="left:0;top:243.5px;font-size:23px;line-height:29px;"><span class="w" style="left:371.82px;transform:scaleX(0.9661)">Provides</span> <span class="w" style="left:465.63px;transform:scaleX(0.9280)">sup...</span></span>
<span class="t" style="left:0;top:243.5px;font-size:23px;line-height:29px;"><span class="w" style="left:543.25px;transform:scaleX(1.0585)">Running</span></span>
<span class="t" style="left:0;top:243.5px;font-size:23px;line-height:29px;"><span class="w" style="left:673.60px;transform:scaleX(1.0403)">Automatic</span></span>
<span class="t" style="left:0;top:243.5px;font-size:23px;line-height:29px;"><span class="w" style="left:860.55px;transform:scaleX(0.9512)">Local</span> <span class="w" style="left:920.16px;transform:scaleX(0.8984)">Syste...</span></span>
<svg class="b" style="left:8px;top:278px;" width="32" height="32" shape-rendering="crispEdges"><use href="#g"/></svg>
<span class="t" style="left:0;top:281.5px;font-size:23px;line-height:29px;"><span class="w" style="left:43.90px;transform:scaleX(1.0369)">Application</span> <span class="w" style="left:167.60px;transform:scaleX(1.0558)">Identity</span></span>
<span class="t" style="left:0;top:281.5px;font-size:23px;line-height:29px;"><span class="w" style="left:371.80px;transform:scaleX(0.9808)">Determines</span> <span class="w" style="left:492.82px;transform:scaleX(0.8918)">...</span></span>
<span class="t" style="left:0;top:281.5px;font-size:23px;line-height:29px;"><span class="w" style="left:673.33px;transform:scaleX(1.0717)">Manual</span> <span class="w" style="left:760.13px;transform:scaleX(0.9216)">(Trigg...</span></span>
<span class="t" style="left:0;top:281.5px;font-size:23px;line-height:29px;"><span class="w" style="left:860.55px;transform:scaleX(0.9512)">Local</span> <span class="w" style="left:920.11px;transform:scaleX(0.9576)">Service</span></span>
<svg class="b" style="left:8px;top:316px;" width="32" height="32" shape-rendering="crispEdges"><use href="#g"/></svg>
<span class="t" style="left:0;top:319.5px;font-size:23px;line-height:29px;"><span class="w" style="left:43.90px;transform:scaleX(1.0390)">Application</span> <span class="w" style="left:167.81px;transform:scaleX(1.0724)">Information</span></span>
<span class="t" style="left:0;top:319.5px;font-size:23px;line-height:29px;"><span class="w" style="left:371.82px;transform:scaleX(0.9676)">Facilitates</span> <span class="w" style="left:478.84px;transform:scaleX(0.9786)">th...</span></span>
<span class="t" style="left:0;top:319.5px;font-size:23px;line-height:29px;"><span class="w" style="left:543.25px;transform:scaleX(1.0585)">Running</span></span>
<span class="t" style="left:0;top:319.5px;font-size:23px;line-height:29px;"><span class="w" style="left:673.33px;transform:scaleX(1.0717)">Manual</span> <span class="w" style="left:760.13px;transform:scaleX(0.9216)">(Trigg...</span></span>
<span class="t" style="left:0;top:319.5px;font-size:23px;line-height:29px;"><span class="w" style="left:860.55px;transform:scaleX(0.9512)">Local</span> <span class="w" style="left:920.16px;transform:scaleX(0.8984)">Syste...</span></span>
<svg class="b" style="left:8px;top:354px;" width="32" height="32" shape-rendering="crispEdges"><use href="#g"/></svg>
<span class="t" style="left:0;top:357.5px;font-size:23px;line-height:29px;"><span class="w" style="left:43.90px;transform:scaleX(1.0284)">Application</span> <span class="w" style="left:167.17px;transform:scaleX(0.9102)">Layer</span> <span class="w" style="left:226.28px;transform:scaleX(0.9413)">Gateway</span> <span class="w" style="left:318.92px;transform:scaleX(0.8073)">S...</span></span>
<span class="t" style="left:0;top:357.5px;font-size:23px;line-height:29px;"><span class="w" style="left:371.82px;transform:scaleX(0.9661)">Provides</span> <span class="w" style="left:465.63px;transform:scaleX(0.9280)">sup...</span></span>
<span class="t" style="left:0;top:357.5px;font-size:23px;line-height:29px;"><span class="w" style="left:673.33px;transform:scaleX(1.0717)">Manual</span></span>
<span class="t" style="left:0;top:357.5px;font-size:23px;line-height:29px;"><span class="w" style="left:860.55px;transform:scaleX(0.9512)">Local</span> <span class="w" style="left:920.11px;transform:scaleX(0.9576)">Service</span></span>
<svg class="b" style="left:8px;top:392px;" width="32" height="32" shape-rendering="crispEdges"><use href="#g"/></svg>
<span class="t" style="left:0;top:395.5px;font-size:23px;line-height:29px;"><span class="w" style="left:43.90px;transform:scaleX(0.9477)">AppX</span> <span class="w" style="left:103.88px;transform:scaleX(1.0070)">Deployment</span> <span class="w" style="left:234.55px;transform:scaleX(0.9576)">Service</span> <span class="w" style="left:314.00px;transform:scaleX(0.8672)">(A...</span></span>
<span class="t" style="left:0;top:395.5px;font-size:23px;line-height:29px;"><span class="w" style="left:371.82px;transform:scaleX(0.9680)">Provides</span> <span class="w" style="left:465.82px;transform:scaleX(1.0155)">infr...</span></span>
<span class="t" style="left:0;top:395.5px;font-size:23px;line-height:29px;"><span class="w" style="left:543.25px;transform:scaleX(1.0585)">Running</span></span>
<span class="t" style="left:0;top:395.5px;font-size:23px;line-height:29px;"><span class="w" style="left:673.33px;transform:scaleX(1.0717)">Manual</span> <span class="w" style="left:760.13px;transform:scaleX(0.9216)">(Trigg...</span></span>
<span class="t" style="left:0;top:395.5px;font-size:23px;line-height:29px;"><span class="w" style="left:860.55px;transform:scaleX(0.9512)">Local</span> <span class="w" style="left:920.16px;transform:scaleX(0.8984)">Syste...</span></span>
<svg class="b" style="left:8px;top:430px;" width="32" height="32" shape-rendering="crispEdges"><use href="#g"/></svg>
<span class="t" style="left:0;top:433.5px;font-size:23px;line-height:29px;"><span class="w" style="left:43.90px;transform:scaleX(0.8748)">ASP.NET</span> <span class="w" style="left:134.01px;transform:scaleX(0.9248)">State</span> <span class="w" style="left:190.52px;transform:scaleX(0.9576)">Service</span></span>
<span class="t" style="left:0;top:433.5px;font-size:23px;line-height:29px;"><span class="w" style="left:371.82px;transform:scaleX(0.9661)">Provides</span> <span class="w" style="left:465.63px;transform:scaleX(0.9280)">sup...</span></span>
<span class="t" style="left:0;top:433.5px;font-size:23px;line-height:29px;"><span class="w" style="left:673.33px;transform:scaleX(1.0717)">Manual</span></span>
<span class="t" style="left:0;top:433.5px;font-size:23px;line-height:29px;"><span class="w" style="left:860.42px;transform:scaleX(1.0238)">Network</span> <span class="w" style="left:954.19px;transform:scaleX(0.8127)">S...</span></span>
<svg class="b" style="left:8px;top:468px;" width="32" height="32" shape-rendering="crispEdges"><use href="#g"/></svg>
<span class="t" style="left:0;top:471.5px;font-size:23px;line-height:29px;"><span class="w" style="left:43.90px;transform:scaleX(1.0329)">Auto</span> <span class="w" style="left:99.50px;transform:scaleX(0.9947)">Time</span> <span class="w" style="left:155.74px;transform:scaleX(1.0347)">Zone</span> <span class="w" style="left:216.89px;transform:scaleX(1.0073)">Updater</span></span>
<span class="t" style="left:0;top:471.5px;font-size:23px;line-height:29px;"><span class="w" style="left:371.90px;transform:scaleX(0.9925)">Automaticall...</span></span>
<span class="t" style="left:0;top:471.5px;font-size:23px;line-height:29px;"><span class="w" style="left:673.44px;transform:scaleX(1.0087)">Disabled</span></span>
<span class="t" style="left:0;top:471.5px;font-size:23px;line-height:29px;"><span class="w" style="left:860.55px;transform:scaleX(0.9512)">Local</span> <span class="w" style="left:920.11px;transform:scaleX(0.9576)">Service</span></span>
<div class="b" style="left:349px;top:504px;width:600px;height:38px;background:#0078d7;"></div>
<svg class="b" style="left:8px;top:506px;clip-path:inset(0 7px 0 0);" width="32" height="32" shape-rendering="crispEdges"><use href="#gs"/></svg>
<span class="t" style="left:0;top:509.5px;font-size:23px;line-height:29px;color:#fff;"><span class="w" style="left:371.46px;transform:scaleX(0.9545)">This</span> <span class="w" style="left:420.51px;transform:scaleX(0.9071)">is</span> <span class="w" style="left:442.67px;transform:scaleX(0.9725)">Audi...</span></span>
<span class="t" style="left:0;top:509.5px;font-size:23px;line-height:29px;color:#fff;"><span class="w" style="left:543.25px;transform:scaleX(1.0585)">Running</span></span>
<span class="t" style="left:0;top:509.5px;font-size:23px;line-height:29px;color:#fff;"><span class="w" style="left:673.33px;transform:scaleX(1.0717)">Manual</span> <span class="w" style="left:760.13px;transform:scaleX(0.9216)">(Trigg...</span></span>
<span class="t" style="left:0;top:509.5px;font-size:23px;line-height:29px;color:#fff;"><span class="w" style="left:860.55px;transform:scaleX(0.9512)">Local</span> <span class="w" style="left:920.11px;transform:scaleX(0.9576)">Service</span></span>
<svg class="b" style="left:8px;top:544px;" width="32" height="32" shape-rendering="crispEdges"><use href="#g"/></svg>
<span class="t" style="left:0;top:547.5px;font-size:23px;line-height:29px;"><span class="w" style="left:43.76px;transform:scaleX(0.9985)">Background</span> <span class="w" style="left:173.30px;transform:scaleX(1.0577)">Intelligent</span> <span class="w" style="left:284.14px;transform:scaleX(0.9524)">Tran...</span></span>
<span class="t" style="left:0;top:547.5px;font-size:23px;line-height:29px;"><span class="w" style="left:371.46px;transform:scaleX(0.9641)">Transfers</span> <span class="w" style="left:471.25px;transform:scaleX(0.9844)">fil...</span></span>
<span class="t" style="left:0;top:547.5px;font-size:23px;line-height:29px;"><span class="w" style="left:543.25px;transform:scaleX(1.0585)">Running</span></span>
<span class="t" style="left:0;top:547.5px;font-size:23px;line-height:29px;"><span class="w" style="left:673.60px;transform:scaleX(1.0403)">Automatic</span> <span class="w" style="left:786.42px;transform:scaleX(0.8324)">(De...</span></span>
<span class="t" style="left:0;top:547.5px;font-size:23px;line-height:29px;"><span class="w" style="left:860.55px;transform:scaleX(0.9512)">Local</span> <span class="w" style="left:920.16px;transform:scaleX(0.8984)">Syste...</span></span>
<svg class="b" style="left:8px;top:582px;" width="32" height="32" shape-rendering="crispEdges"><use href="#g"/></svg>
<span class="t" style="left:0;top:585.5px;font-size:23px;line-height:29px;"><span class="w" style="left:43.77px;transform:scaleX(0.9944)">Background</span> <span class="w" style="left:172.87px;transform:scaleX(0.9245)">Tasks</span> <span class="w" style="left:234.09px;transform:scaleX(0.9847)">Infrastruc...</span></span>
<span class="t" style="left:0;top:585.5px;font-size:23px;line-height:29px;"><span class="w" style="left:371.90px;transform:scaleX(1.0294)">Windows</span> <span class="w" style="left:475.44px;transform:scaleX(0.9725)">in...</span></span>
<span class="t" style="left:0;top:585.5px;font-size:23px;line-height:29px;"><span class="w" style="left:543.25px;transform:scaleX(1.0585)">Running</span></span>
<span class="t" style="left:0;top:585.5px;font-size:23px;line-height:29px;"><span class="w" style="left:673.60px;transform:scaleX(1.0403)">Automatic</span></span>
<span class="t" style="left:0;top:585.5px;font-size:23px;line-height:29px;"><span class="w" style="left:860.55px;transform:scaleX(0.9512)">Local</span> <span class="w" style="left:920.16px;transform:scaleX(0.8984)">Syste...</span></span>
<svg class="b" style="left:8px;top:620px;" width="32" height="32" shape-rendering="crispEdges"><use href="#g"/></svg>
<span class="t" style="left:0;top:623.5px;font-size:23px;line-height:29px;"><span class="w" style="left:43.96px;transform:scaleX(0.8931)">Base</span> <span class="w" style="left:97.53px;transform:scaleX(1.0385)">Filtering</span> <span class="w" style="left:189.73px;transform:scaleX(1.0089)">Engine</span></span>
<span class="t" style="left:0;top:623.5px;font-size:23px;line-height:29px;"><span class="w" style="left:371.46px;transform:scaleX(0.9469)">The</span> <span class="w" style="left:416.12px;transform:scaleX(0.8817)">Base</span> <span class="w" style="left:469.33px;transform:scaleX(0.9106)">Fil...</span></span>
<span class="t" style="left:0;top:623.5px;font-size:23px;line-height:29px;"><span class="w" style="left:543.25px;transform:scaleX(1.0585)">Running</span></span>
<span class="t" style="left:0;top:623.5px;font-size:23px;line-height:29px;"><span class="w" style="left:673.60px;transform:scaleX(1.0403)">Automatic</span></span>
<span class="t" style="left:0;top:623.5px;font-size:23px;line-height:29px;"><span class="w" style="left:860.55px;transform:scaleX(0.9512)">Local</span> <span class="w" style="left:920.11px;transform:scaleX(0.9576)">Service</span></span>
<svg class="b" style="left:8px;top:658px;" width="32" height="32" shape-rendering="crispEdges"><use href="#g"/></svg>
<span class="t" style="left:0;top:661.5px;font-size:23px;line-height:29px;"><span class="w" style="left:43.89px;transform:scaleX(0.9275)">BcastDVRUserService_30128</span></span>
<span class="t" style="left:0;top:661.5px;font-size:23px;line-height:29px;"><span class="w" style="left:371.46px;transform:scaleX(0.9545)">This</span> <span class="w" style="left:420.44px;transform:scaleX(0.9569)">user</span> <span class="w" style="left:470.38px;transform:scaleX(0.8724)">se...</span></span>
<span class="t" style="left:0;top:661.5px;font-size:23px;line-height:29px;"><span class="w" style="left:673.33px;transform:scaleX(1.0717)">Manual</span></span>
<span class="t" style="left:0;top:661.5px;font-size:23px;line-height:29px;"><span class="w" style="left:860.55px;transform:scaleX(0.9512)">Local</span> <span class="w" style="left:920.16px;transform:scaleX(0.8984)">Syste...</span></span>
<svg class="b" style="left:8px;top:696px;" width="32" height="32" shape-rendering="crispEdges"><use href="#g"/></svg>
<span class="t" style="left:0;top:699.5px;font-size:23px;line-height:29px;"><span class="w" style="left:43.82px;transform:scaleX(0.9697)">Betternet</span> <span class="w" style="left:141.35px;transform:scaleX(0.9576)">Service</span> <span class="w" style="left:221.47px;transform:scaleX(0.8908)">6.12.1</span></span>
<span class="t" style="left:0;top:699.5px;font-size:23px;line-height:29px;"><span class="w" style="left:371.81px;transform:scaleX(0.9754)">Responsible...</span></span>
<span class="t" style="left:0;top:699.5px;font-size:23px;line-height:29px;"><span class="w" style="left:673.33px;transform:scaleX(1.0717)">Manual</span></span>
<span class="t" style="left:0;top:699.5px;font-size:23px;line-height:29px;"><span class="w" style="left:860.55px;transform:scaleX(0.9512)">Local</span> <span class="w" style="left:920.16px;transform:scaleX(0.8984)">Syste...</span></span>
<svg class="b" style="left:8px;top:734px;" width="32" height="32" shape-rendering="crispEdges"><use href="#g"/></svg>
<span class="t" style="left:0;top:737.5px;font-size:23px;line-height:29px;"><span class="w" style="left:43.84px;transform:scaleX(0.9591)">BitLocker</span> <span class="w" style="left:142.67px;transform:scaleX(0.9735)">Drive</span> <span class="w" style="left:201.78px;transform:scaleX(1.0114)">Encryption</span> <span class="w" style="left:319.14px;transform:scaleX(0.8068)">S...</span></span>
<span class="t" style="left:0;top:737.5px;font-size:23px;line-height:29px;"><span class="w" style="left:372.02px;transform:scaleX(0.8607)">BDESVC</span> <span class="w" style="left:460.93px;transform:scaleX(0.9571)">hos...</span></span>
<span class="t" style="left:0;top:737.5px;font-size:23px;line-height:29px;"><span class="w" style="left:673.33px;transform:scaleX(1.0717)">Manual</span> <span class="w" style="left:760.13px;transform:scaleX(0.9216)">(Trigg...</span></span>
<span class="t" style="left:0;top:737.5px;font-size:23px;line-height:29px;"><span class="w" style="left:860.55px;transform:scaleX(0.9512)">Local</span> <span class="w" style="left:920.16px;transform:scaleX(0.8984)">Syste...</span></span>
<svg class="b" style="left:8px;top:772px;" width="32" height="32" shape-rendering="crispEdges"><use href="#g"/></svg>
<span class="t" style="left:0;top:775.5px;font-size:23px;line-height:29px;"><span class="w" style="left:43.84px;transform:scaleX(0.9544)">Block</span> <span class="w" style="left:105.03px;transform:scaleX(0.9092)">Level</span> <span class="w" style="left:162.48px;transform:scaleX(0.9474)">Backup</span> <span class="w" style="left:242.32px;transform:scaleX(0.9955)">Engine</span> <span class="w" style="left:320.56px;transform:scaleX(0.8123)">S...</span></span>
<span class="t" style="left:0;top:775.5px;font-size:23px;line-height:29px;"><span class="w" style="left:371.46px;transform:scaleX(0.9469)">The</span> <span class="w" style="left:416.04px;transform:scaleX(0.9062)">WBENG...</span></span>
<span class="t" style="left:0;top:775.5px;font-size:23px;line-height:29px;"><span class="w" style="left:673.33px;transform:scaleX(1.0717)">Manual</span></span>
<span class="t" style="left:0;top:775.5px;font-size:23px;line-height:29px;"><span class="w" style="left:860.55px;transform:scaleX(0.9512)">Local</span> <span class="w" style="left:920.16px;transform:scaleX(0.8984)">Syste...</span></span>
<svg class="b" style="left:8px;top:810px;" width="32" height="32" shape-rendering="crispEdges"><use href="#g"/></svg>
<span class="t" style="left:0;top:813.5px;font-size:23px;line-height:29px;"><span class="w" style="left:43.70px;transform:scaleX(1.0349)">Bluetooth</span> <span class="w" style="left:151.72px;transform:scaleX(1.0323)">Audio</span> <span class="w" style="left:219.43px;transform:scaleX(0.9452)">Gateway</span> <span class="w" style="left:312.39px;transform:scaleX(0.8455)">Se...</span></span>
<span class="t" style="left:0;top:813.5px;font-size:23px;line-height:29px;"><span class="w" style="left:371.72px;transform:scaleX(0.9576)">Service</span> <span class="w" style="left:452.43px;transform:scaleX(0.9405)">sup...</span></span>
<span class="t" style="left:0;top:813.5px;font-size:23px;line-height:29px;"><span class="w" style="left:673.33px;transform:scaleX(1.0717)">Manual</span> <span class="w" style="left:760.13px;transform:scaleX(0.9216)">(Trigg...</span></span>
<span class="t" style="left:0;top:813.5px;font-size:23px;line-height:29px;"><span class="w" style="left:860.55px;transform:scaleX(0.9512)">Local</span> <span class="w" style="left:920.11px;transform:scaleX(0.9576)">Service</span></span>
<div class="b" style="left:892px;top:0px;width:1px;height:843px;background:#fff;"></div>
<div class="b" style="left:892px;top:504px;width:1px;height:38px;background:#0078d7;"></div>
</div>
<div class="b" style="left:1573px;top:220px;width:32px;height:843px;background:#f0f0f0;"></div>
<div class="b" style="left:1573px;top:254px;width:32px;height:58px;background:#cdcdcd;"></div>
<svg class="b" style="left:1573px;top:220px" width="32" height="843"><g fill="#5e5e5e"><path d="M15.4 12.8 L20.9 18.2 V22.1 L15.4 16.9 L9.9 22.1 V18.2 Z"/><path d="M15.4 828.8 L20.9 823.4 V819.5 L15.4 824.7 L9.9 819.5 V823.4 Z"/></g></svg>
<div class="b" style="left:680px;top:1063px;width:925px;height:32px;background:#f0f0f0;"></div>
<div class="b" style="left:714px;top:1063px;width:730px;height:32px;background:#cdcdcd;"></div>
<svg class="b" style="left:680px;top:1063px" width="893" height="32"><g fill="none" stroke="#606060" stroke-width="2.6"><path d="M10.9 15.4 L16.6 9.9 H20.2 L14.9 15.4 L20.2 20.9 H16.6 Z" fill="#5e5e5e" stroke="none"/><path d="M878.6 15.4 L872.9 9.9 H869.3 L874.6 15.4 L869.3 20.9 H872.9 Z" fill="#5e5e5e" stroke="none"/></g></svg>
<svg class="b" style="left:250px;top:1096px" width="270" height="44">
<path d="M137.6 4.8 H256.5 L241.8 40.4 H140.2 L130 16" fill="#f0f0f0" stroke="#7d7d7d" stroke-width="1.4"/>
<path d="M255.2 5.5 L240.6 40" stroke="#9a9a9a" stroke-width="2.6"/>
<path d="M2.6 2 V4.8 L17.7 40.4 H122.8 L137.6 4.8 V2 Z" fill="#fff"/>
<path d="M2.6 2 V4.8 L17.7 40.4 H122.8 L137.6 4.8" fill="none" stroke="#7d7d7d" stroke-width="1.4"/>
</svg>
<span class="t" style="left:0;top:1105.0px;font-size:23px;line-height:29px;"><span class="w" style="left:271.07px;transform:scaleX(0.9939)">Extended</span></span>
<span class="t" style="left:0;top:1105.0px;font-size:23px;line-height:29px;"><span class="w" style="left:394.07px;transform:scaleX(1.0112)">Standard</span></span>
<div class="b" style="left:2px;top:1138px;width:1608px;height:1px;background:#d7d7d7;"></div>
<div class="b" style="left:1435px;top:1142px;width:1px;height:41px;background:#d7d7d7;"></div>
<div class="b" style="left:1605px;top:1142px;width:1px;height:41px;background:#d7d7d7;"></div>
<span class="t" style="left:0;top:1150.0px;font-size:24px;line-height:30px;"><span class="w" style="left:5.59px;transform:scaleX(0.9428)">Opens</span> <span class="w" style="left:79.19px;transform:scaleX(1.0000)">the</span> <span class="w" style="left:119.65px;transform:scaleX(0.9746)">properties</span> <span class="w" style="left:230.74px;transform:scaleX(1.0022)">dialog</span> <span class="w" style="left:302.56px;transform:scaleX(0.9890)">box</span> <span class="w" style="left:347.45px;transform:scaleX(1.0505)">for</span> <span class="w" style="left:383.37px;transform:scaleX(1.0000)">the</span> <span class="w" style="left:423.49px;transform:scaleX(0.9840)">current</span> <span class="w" style="left:504.33px;transform:scaleX(0.9679)">selection.</span></span>
<svg class="b" style="left:0;top:1150px" width="8" height="30"><path d="M-3 8 A6 6 0 0 1 4 14" fill="none" stroke="#000" stroke-width="1.6"/></svg>
<div id="menu">
<div class="b" style="left:0px;top:0px;width:60px;height:458px;background:#f0f0f0;"></div>
<div class="b" style="left:5px;top:355px;width:278px;height:44px;background:#91c9f7;"></div>
<div class="b" style="left:10px;top:355px;width:261px;height:46px;background:transparent;box-sizing:border-box;border:5px solid #ed1c24;"></div>
<span class="t" style="left:0;top:14.0px;font-size:24px;line-height:30px;color:#6d6d6d;"><span class="w" style="left:68.89px;transform:scaleX(0.9461)">Start</span></span>
<span class="t" style="left:0;top:58.0px;font-size:24px;line-height:30px;"><span class="w" style="left:68.86px;transform:scaleX(0.9743)">Stop</span></span>
<span class="t" style="left:0;top:102.0px;font-size:24px;line-height:30px;color:#6d6d6d;"><span class="w" style="left:69.06px;transform:scaleX(0.9053)">Pause</span></span>
<span class="t" style="left:0;top:146.0px;font-size:24px;line-height:30px;color:#6d6d6d;"><span class="w" style="left:69.00px;transform:scaleX(0.9372)">Resume</span></span>
<span class="t" style="left:0;top:190.0px;font-size:24px;line-height:30px;"><span class="w" style="left:69.00px;transform:scaleX(0.9378)">Restart</span></span>
<span class="t" style="left:0;top:248.0px;font-size:24px;line-height:30px;"><span class="w" style="left:69.10px;transform:scaleX(0.9047)">All</span> <span class="w" style="left:100.24px;transform:scaleX(0.8787)">Tasks</span></span>
<span class="t" style="left:0;top:306.0px;font-size:24px;line-height:30px;"><span class="w" style="left:69.00px;transform:scaleX(0.9397)">Refresh</span></span>
<span class="t" style="left:0;top:422.0px;font-size:24px;line-height:30px;"><span class="w" style="left:68.86px;transform:scaleX(1.0095)">Help</span></span>
<span class="t" style="left:0;top:364.0px;font-size:24px;line-height:30px;font-weight:bold;"><span class="w" style="left:69.45px;transform:scaleX(0.9399)">Properties</span></span>
<div class="b" style="left:61px;top:229px;width:222px;height:1px;background:#d7d7d7;"></div>
<div class="b" style="left:61px;top:287px;width:222px;height:1px;background:#d7d7d7;"></div>
<div class="b" style="left:61px;top:345px;width:222px;height:1px;background:#d7d7d7;"></div>
<div class="b" style="left:61px;top:403px;width:222px;height:1px;background:#d7d7d7;"></div>
<svg class="b" style="left:253px;top:251px" width="14" height="20"><path d="M3 3 L10 9 L3 15" fill="none" stroke="#222" stroke-width="1.5"/></svg>
</div>
</body></html>
